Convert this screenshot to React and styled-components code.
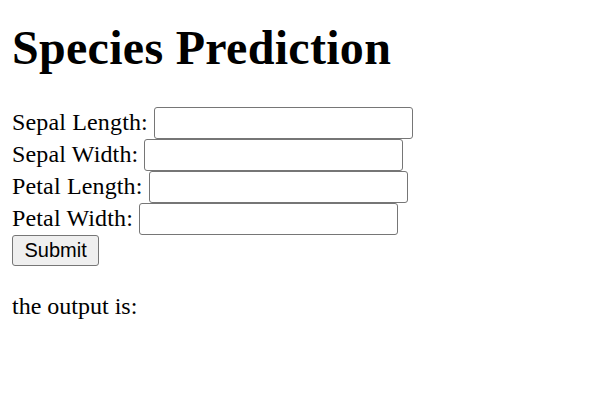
import React from "react";
import styled, { createGlobalStyle } from "styled-components";

const Global = createGlobalStyle`
  html, body { background: #ffffff; }
  body {
    margin: 0 12px 12px;
    font-family: "Liberation Serif", "Times New Roman", serif;
    font-size: 24px;
    color: #000000;
  }
`;

const Title = styled.h1`
  font-size: 48px;
  font-weight: bold;
  letter-spacing: 0.3px;
  margin: 20px 0 32px;
`;

const Form = styled.form`
  margin: 0;
`;

const Row = styled.div`
  display: block;
`;

const Label = styled.label`
  font-size: 24px;
  letter-spacing: 0.15px;
`;

const Field = styled.input`
  box-sizing: border-box;
  width: 259px;
  height: 32px;
  margin: 0;
  padding: 2px 3px;
  border: 1px solid #767676;
  border-radius: 3px;
  background: #ffffff;
  font-family: "Liberation Sans", Arial, sans-serif;
  font-size: 20px;
  vertical-align: baseline;
`;

const SubmitButton = styled.button`
  box-sizing: border-box;
  height: 31px;
  margin: 0;
  padding: 1px 11.5px;
  border: 1px solid #767676;
  border-radius: 3px;
  background: #efefef;
  color: #000000;
  font-family: "Liberation Sans", Arial, sans-serif;
  font-size: 20px;
`;

const Output = styled.p`
  margin: 27px 0 24px;
`;

const fields = ["Sepal Length", "Sepal Width", "Petal Length", "Petal Width"];

export default function App() {
  return (
    <>
      <Global />
      <Title>Species Prediction</Title>
      <Form onSubmit={(e) => e.preventDefault()}>
        {fields.map((f) => (
          <Row key={f}>
            <Label>{f}:</Label> <Field type="text" />
          </Row>
        ))}
        <SubmitButton type="submit">Submit</SubmitButton>
      </Form>
      <Output>the output is:</Output>
    </>
  );
}
